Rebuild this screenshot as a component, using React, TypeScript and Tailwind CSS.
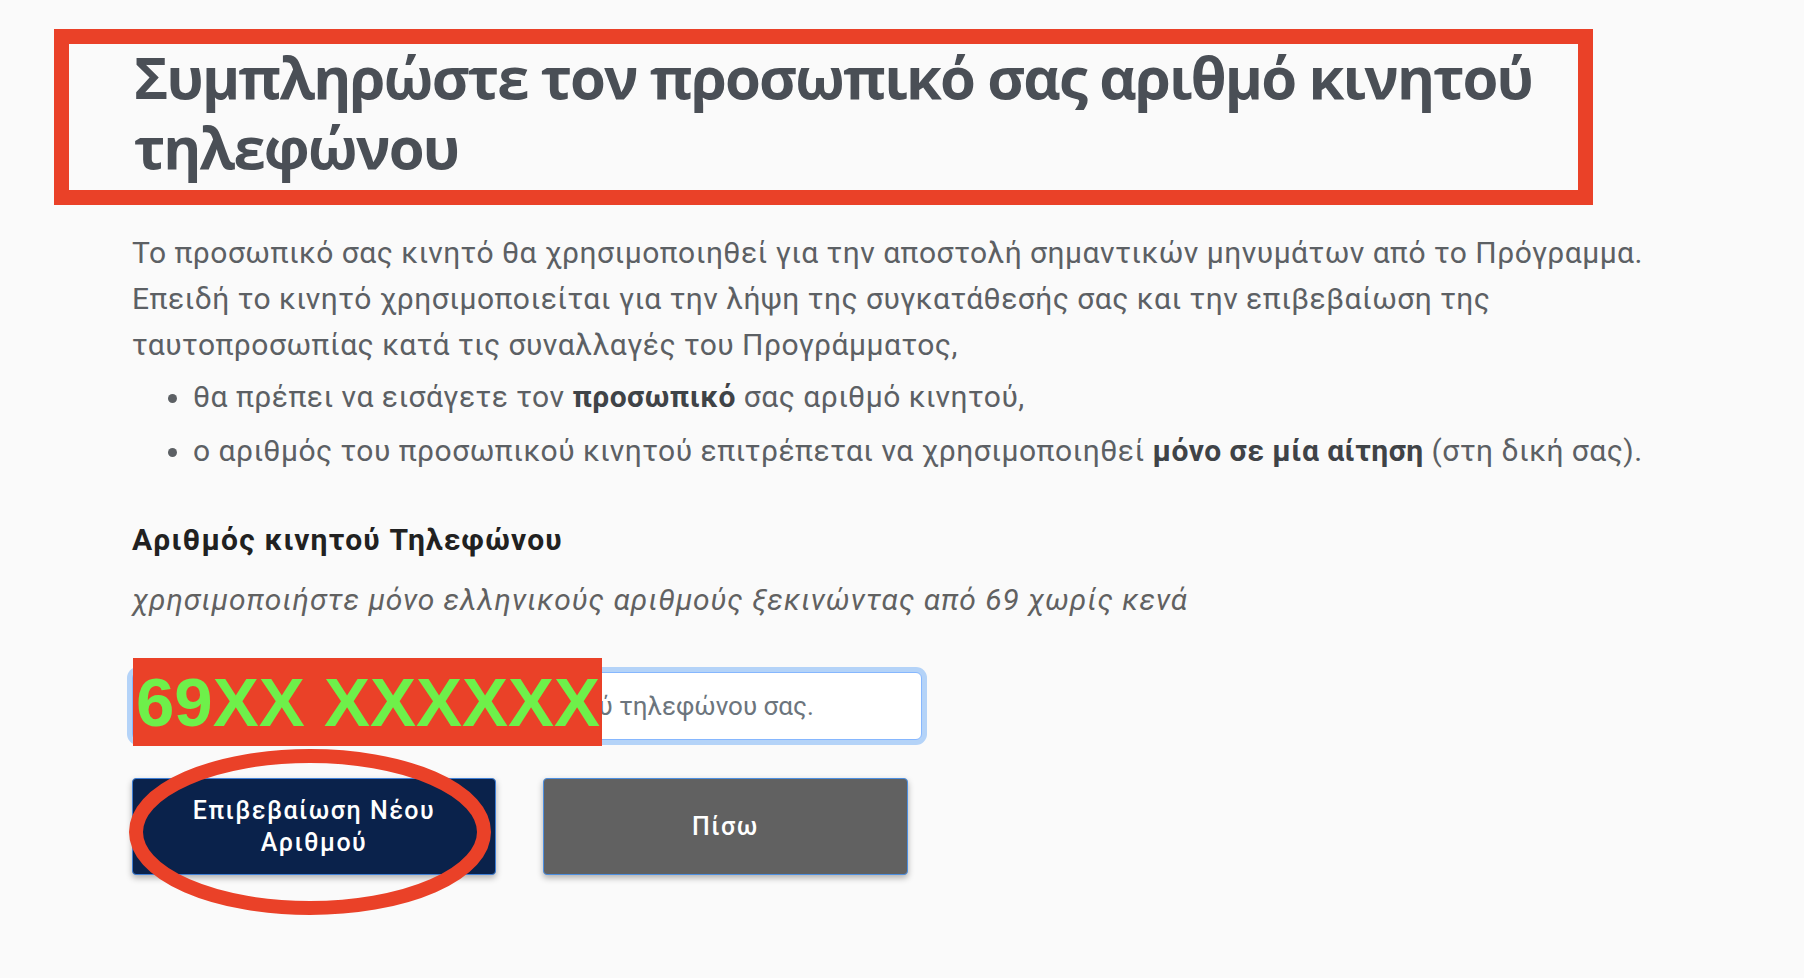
import React from "react";

const App = () => {
  return (
    <div className="min-h-screen bg-[#fafafa] pt-[29px] pb-16 font-['Roboto',sans-serif]">
      {/* heading with the red annotation frame */}
      <div className="ml-[54px] w-[1539px] border-[15px] border-[#ea4128] pl-[65px] pb-[8px]">
        <h1 className="-mt-[2px] font-['Open_Sans',sans-serif] text-[58px] leading-[70px] font-bold tracking-[-0.032em] text-[#4a4f56]">
          Συμπληρώστε τον προσωπικό σας αριθμό κινητού τηλεφώνου
        </h1>
      </div>

      <div className="pl-[132px]">
        <p className="mt-[25px] text-[30px] leading-[46px] tracking-[0.016em] text-[#5c6064]">
          Το προσωπικό σας κινητό θα χρησιμοποιηθεί για την αποστολή σημαντικών μηνυμάτων από το Πρόγραμμα.
          <br />
          Επειδή το κινητό χρησιμοποιείται για την λήψη της συγκατάθεσής σας και την επιβεβαίωση της
          <br />
          ταυτοπροσωπίας κατά τις συναλλαγές του Προγράμματος,
        </p>

        <ul className="mt-[6px] list-disc pl-[61px] text-[30px] leading-[46px] tracking-[0.016em] text-[#5c6064]">
          <li className="mb-2">
            θα πρέπει να εισάγετε τον <b className="text-[#3f4347]">προσωπικό</b> σας αριθμό κινητού,
          </li>
          <li className="mb-2">
            ο αριθμός του προσωπικού κινητού επιτρέπεται να χρησιμοποιηθεί{" "}
            <b className="text-[#3f4347]">μόνο σε μία αίτηση</b> (στη δική σας).
          </li>
        </ul>

        <label className="mt-[46px] block text-[30px] leading-[40px] font-bold tracking-[0.04em] text-[#212121]">
          Αριθμός κινητού Τηλεφώνου
        </label>
        <p className="mt-[20px] text-[30px] leading-[40px] italic tracking-[0.03em] text-[#616161]">
          χρησιμοποιήστε μόνο ελληνικούς αριθμούς ξεκινώντας από 69 χωρίς κενά
        </p>

        {/* input + redaction overlay */}
        <div className="relative mt-[52px] w-[790px]">
          <input
            type="text"
            placeholder="Εισάγετε τον αριθμό του κινητού τηλεφώνου σας."
            className="h-[68px] w-full rounded-[6px] border border-[#86b7fe] bg-white pl-[90px] text-[26px] text-[#212529] shadow-[0_0_0_5px_#b4d3f8] outline-none placeholder:text-[#6c757d]"
          />
          <div className="absolute left-[1px] top-[-14px] flex h-[88px] w-[469px] items-center bg-[#ea4128] pl-[3px]">
            <span className="font-['Liberation_Sans',Arial,sans-serif] text-[69px] leading-none font-bold text-[#6ef04a]">
              69XX XXXXXX
            </span>
          </div>
        </div>

        {/* buttons + circled annotation */}
        <div className="relative mt-[38px] flex gap-[47px]">
          <button className="h-[97px] w-[364px] rounded-[4px] border border-[#3f7fd6] bg-[#0a224b] px-4 text-[25px] leading-[32px] font-medium tracking-[0.06em] text-white shadow-[0_3px_6px_rgba(0,0,0,0.3)]">
            Επιβεβαίωση Νέου Αριθμού
          </button>
          <button className="h-[97px] w-[365px] rounded-[4px] border border-[#4d8fe0] bg-[#616161] px-4 text-[25px] leading-[32px] font-medium tracking-[0.06em] text-white shadow-[0_3px_6px_rgba(0,0,0,0.3)]">
            Πίσω
          </button>
          <svg
            className="pointer-events-none absolute left-[-3px] top-[-29px]"
            width="362"
            height="166"
            viewBox="0 0 362 166"
          >
            <ellipse cx="181" cy="83" rx="174" ry="76" fill="none" stroke="#ea4128" strokeWidth="14" />
          </svg>
        </div>
      </div>
    </div>
  );
};

export default App;
